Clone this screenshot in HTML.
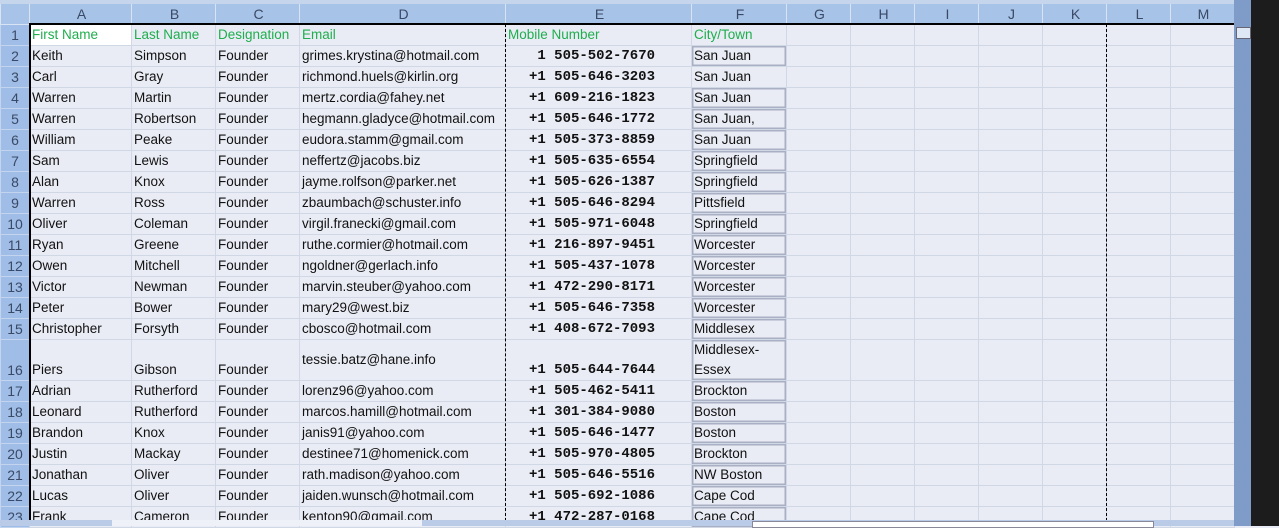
<!DOCTYPE html>
<html><head><meta charset="utf-8"><style>
body{margin:0;width:1279px;height:526px;overflow:hidden;background:#e9ecf5;position:relative;font-family:"Liberation Sans",sans-serif;}
#top{position:absolute;left:0;top:0;width:1251px;height:4px;background:#c5d5ec;}
table{position:absolute;left:0;top:4px;border-collapse:collapse;table-layout:fixed;font-size:13.5px;color:#111;}
td{height:20px;border:1px solid #d0d7e5;padding:0 0 0 2px;white-space:nowrap;overflow:hidden;background:#e9ecf5;line-height:20px;}
tr.h td{background:#a7c3e8;text-align:center;color:#3a4a66;border:1px solid #d8e4f4;border-top:none;height:19px;font-size:14px;}
td.r{background:#9fbde6;text-align:center;color:#3a4a66;border:1px solid #c3d5ee;padding:0;font-size:14px;}
tr.h td.corner{background:#a7c3e8;}
tr.g td:not(.r){color:#1fae4d;}
td.ph{font-family:"Liberation Mono",monospace;font-weight:bold;text-align:right;padding-right:36px;font-size:14px;}
td.f{box-shadow:inset 0 0 0 1.5px #aab0c4;}
tr.t td{height:40px;vertical-align:bottom;}
#d1,#d2{position:absolute;top:24px;height:502px;border-left:1px dashed #000;}
#d1{left:505px}#d2{left:1106px}
#hl{position:absolute;left:29px;top:23px;width:1205px;height:2px;background:#000;}
#vl{position:absolute;left:29px;top:24px;width:2px;height:502px;background:#000;}
#sb{position:absolute;left:1234px;top:0;width:17px;height:526px;background:#7f9cc8;}
#sbt{position:absolute;left:1236px;top:27px;width:13px;height:10px;background:#dfe8f5;border:1px solid #667;}
#blk{position:absolute;left:1251px;top:0;width:28px;height:526px;background:#1c1c1c;}
#tabs{position:absolute;left:0;top:520px;width:1234px;height:6px;background:#b9cbe6;}
#hs{position:absolute;left:112px;top:520px;width:310px;height:6px;background:#eef2f8;}
#hs2{position:absolute;left:752px;top:521px;width:400px;height:5px;background:#fff;border:1px solid #889;}
</style></head><body>
<div id="top"></div>
<table>
<colgroup><col style="width:29px"><col style="width:102px"><col style="width:84px"><col style="width:84px"><col style="width:206px"><col style="width:186px"><col style="width:95px"><col style="width:64px"><col style="width:64px"><col style="width:64px"><col style="width:64px"><col style="width:64px"><col style="width:64px"><col style="width:64px"></colgroup>
<tr class="h"><td class="corner"></td><td>A</td><td>B</td><td>C</td><td>D</td><td>E</td><td>F</td><td>G</td><td>H</td><td>I</td><td>J</td><td>K</td><td>L</td><td>M</td></tr>
<tr class="g"><td class="r">1</td><td style="background:#fff">First Name</td><td>Last Name</td><td>Designation</td><td>Email</td><td>Mobile Number</td><td>City/Town</td><td></td><td></td><td></td><td></td><td></td><td></td><td></td></tr>
<tr><td class="r">2</td><td>Keith</td><td>Simpson</td><td>Founder</td><td>grimes.krystina@hotmail.com</td><td class="ph">1 505-502-7670</td><td class="f">San Juan</td><td></td><td></td><td></td><td></td><td></td><td></td><td></td></tr>
<tr><td class="r">3</td><td>Carl</td><td>Gray</td><td>Founder</td><td>richmond.huels@kirlin.org</td><td class="ph">+1 505-646-3203</td><td>San Juan</td><td></td><td></td><td></td><td></td><td></td><td></td><td></td></tr>
<tr><td class="r">4</td><td>Warren</td><td>Martin</td><td>Founder</td><td>mertz.cordia@fahey.net</td><td class="ph">+1 609-216-1823</td><td class="f">San Juan</td><td></td><td></td><td></td><td></td><td></td><td></td><td></td></tr>
<tr><td class="r">5</td><td>Warren</td><td>Robertson</td><td>Founder</td><td>hegmann.gladyce@hotmail.com</td><td class="ph">+1 505-646-1772</td><td class="f">San Juan,</td><td></td><td></td><td></td><td></td><td></td><td></td><td></td></tr>
<tr><td class="r">6</td><td>William</td><td>Peake</td><td>Founder</td><td>eudora.stamm@gmail.com</td><td class="ph">+1 505-373-8859</td><td class="f">San Juan</td><td></td><td></td><td></td><td></td><td></td><td></td><td></td></tr>
<tr><td class="r">7</td><td>Sam</td><td>Lewis</td><td>Founder</td><td>neffertz@jacobs.biz</td><td class="ph">+1 505-635-6554</td><td class="f">Springfield</td><td></td><td></td><td></td><td></td><td></td><td></td><td></td></tr>
<tr><td class="r">8</td><td>Alan</td><td>Knox</td><td>Founder</td><td>jayme.rolfson@parker.net</td><td class="ph">+1 505-626-1387</td><td class="f">Springfield</td><td></td><td></td><td></td><td></td><td></td><td></td><td></td></tr>
<tr><td class="r">9</td><td>Warren</td><td>Ross</td><td>Founder</td><td>zbaumbach@schuster.info</td><td class="ph">+1 505-646-8294</td><td class="f">Pittsfield</td><td></td><td></td><td></td><td></td><td></td><td></td><td></td></tr>
<tr><td class="r">10</td><td>Oliver</td><td>Coleman</td><td>Founder</td><td>virgil.franecki@gmail.com</td><td class="ph">+1 505-971-6048</td><td class="f">Springfield</td><td></td><td></td><td></td><td></td><td></td><td></td><td></td></tr>
<tr><td class="r">11</td><td>Ryan</td><td>Greene</td><td>Founder</td><td>ruthe.cormier@hotmail.com</td><td class="ph">+1 216-897-9451</td><td class="f">Worcester</td><td></td><td></td><td></td><td></td><td></td><td></td><td></td></tr>
<tr><td class="r">12</td><td>Owen</td><td>Mitchell</td><td>Founder</td><td>ngoldner@gerlach.info</td><td class="ph">+1 505-437-1078</td><td class="f">Worcester</td><td></td><td></td><td></td><td></td><td></td><td></td><td></td></tr>
<tr><td class="r">13</td><td>Victor</td><td>Newman</td><td>Founder</td><td>marvin.steuber@yahoo.com</td><td class="ph">+1 472-290-8171</td><td class="f">Worcester</td><td></td><td></td><td></td><td></td><td></td><td></td><td></td></tr>
<tr><td class="r">14</td><td>Peter</td><td>Bower</td><td>Founder</td><td>mary29@west.biz</td><td class="ph">+1 505-646-7358</td><td class="f">Worcester</td><td></td><td></td><td></td><td></td><td></td><td></td><td></td></tr>
<tr><td class="r">15</td><td>Christopher</td><td>Forsyth</td><td>Founder</td><td>cbosco@hotmail.com</td><td class="ph">+1 408-672-7093</td><td class="f">Middlesex</td><td></td><td></td><td></td><td></td><td></td><td></td><td></td></tr>
<tr class="t"><td class="r">16</td><td>Piers</td><td>Gibson</td><td>Founder</td><td style="vertical-align:middle">tessie.batz@hane.info</td><td class="ph">+1 505-644-7644</td><td class="f" style="line-height:20px">Middlesex-<br>Essex</td><td></td><td></td><td></td><td></td><td></td><td></td><td></td></tr>
<tr><td class="r">17</td><td>Adrian</td><td>Rutherford</td><td>Founder</td><td>lorenz96@yahoo.com</td><td class="ph">+1 505-462-5411</td><td class="f">Brockton</td><td></td><td></td><td></td><td></td><td></td><td></td><td></td></tr>
<tr><td class="r">18</td><td>Leonard</td><td>Rutherford</td><td>Founder</td><td>marcos.hamill@hotmail.com</td><td class="ph">+1 301-384-9080</td><td class="f">Boston</td><td></td><td></td><td></td><td></td><td></td><td></td><td></td></tr>
<tr><td class="r">19</td><td>Brandon</td><td>Knox</td><td>Founder</td><td>janis91@yahoo.com</td><td class="ph">+1 505-646-1477</td><td class="f">Boston</td><td></td><td></td><td></td><td></td><td></td><td></td><td></td></tr>
<tr><td class="r">20</td><td>Justin</td><td>Mackay</td><td>Founder</td><td>destinee71@homenick.com</td><td class="ph">+1 505-970-4805</td><td class="f">Brockton</td><td></td><td></td><td></td><td></td><td></td><td></td><td></td></tr>
<tr><td class="r">21</td><td>Jonathan</td><td>Oliver</td><td>Founder</td><td>rath.madison@yahoo.com</td><td class="ph">+1 505-646-5516</td><td class="f">NW Boston</td><td></td><td></td><td></td><td></td><td></td><td></td><td></td></tr>
<tr><td class="r">22</td><td>Lucas</td><td>Oliver</td><td>Founder</td><td>jaiden.wunsch@hotmail.com</td><td class="ph">+1 505-692-1086</td><td class="f">Cape Cod</td><td></td><td></td><td></td><td></td><td></td><td></td><td></td></tr>
<tr><td class="r">23</td><td>Frank</td><td>Cameron</td><td>Founder</td><td>kenton90@gmail.com</td><td class="ph">+1 472-287-0168</td><td class="f">Cape Cod</td><td></td><td></td><td></td><td></td><td></td><td></td><td></td></tr>
</table>
<div id="hl"></div><div id="vl"></div>
<div id="d1"></div><div id="d2"></div>
<div id="tabs"></div><div id="hs"></div><div id="hs2"></div>
<div id="sb"></div><div id="sbt"></div><div id="blk"></div>
</body></html>
